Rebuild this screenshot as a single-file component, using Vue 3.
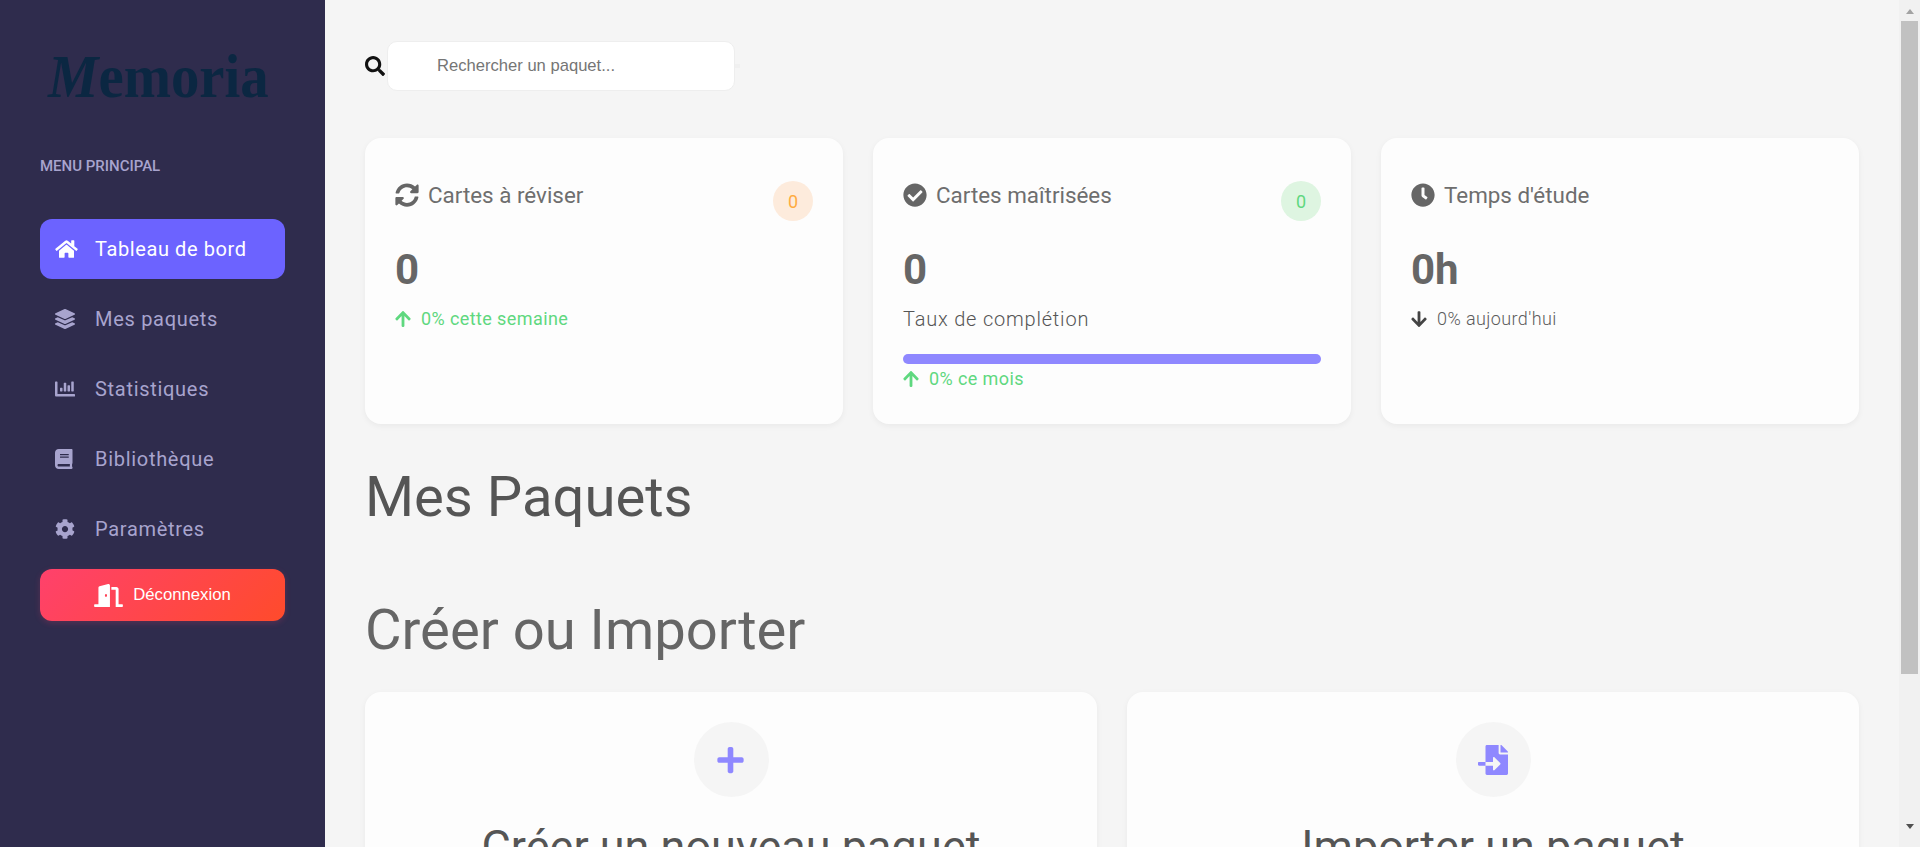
<template>
  <div class="layout">
    <aside class="sidebar">
      <div class="logo"><span class="logo-m">M</span>emoria</div>
      <div class="menu-title">MENU PRINCIPAL</div>
      <nav class="menu">
        <a v-for="item in menu" :key="item.label" :class="['menu-item', { active: item.active }]">
          <span class="menu-icon">
            <svg :viewBox="item.box" :style="{ width: item.w + 'px' }"><path :d="item.d" /></svg>
          </span>
          <span>{{ item.label }}</span>
        </a>
      </nav>
      <button class="logout">
        <svg class="logout-icon" viewBox="0 0 640 512"><path :d="icons.door" /></svg>
        <span>Déconnexion</span>
      </button>
    </aside>

    <main class="main">
      <div class="search">
        <svg class="search-icon" viewBox="0 0 512 512"><path :d="icons.search" /></svg>
        <input type="text" placeholder="Rechercher un paquet..." />
      </div>

      <section class="stats">
        <div class="card">
          <div class="card-head">
            <h3><svg viewBox="0 0 512 512"><path :d="icons.sync" /></svg>Cartes à réviser</h3>
            <span class="badge orange">0</span>
          </div>
          <div class="value">0</div>
          <div class="trend up">
            <svg viewBox="0 0 448 512"><path :d="icons.up" /></svg>0% cette semaine
          </div>
        </div>

        <div class="card">
          <div class="card-head">
            <h3><svg viewBox="0 0 512 512"><path :d="icons.check" /></svg>Cartes maîtrisées</h3>
            <span class="badge green">0</span>
          </div>
          <div class="value">0</div>
          <div class="rate">Taux de complétion</div>
          <div class="bar"></div>
          <div class="trend up tight">
            <svg viewBox="0 0 448 512"><path :d="icons.up" /></svg>0% ce mois
          </div>
        </div>

        <div class="card">
          <div class="card-head">
            <h3><svg viewBox="0 0 512 512"><path :d="icons.clock" /></svg>Temps d'étude</h3>
          </div>
          <div class="value">0h</div>
          <div class="trend down">
            <svg viewBox="0 0 448 512"><path :d="icons.down" /></svg>0% aujourd'hui
          </div>
        </div>
      </section>

      <h2 class="packs-title">Mes Paquets</h2>
      <h2 class="create-title">Créer ou Importer</h2>

      <section class="actions">
        <div class="action">
          <div class="action-icon"><svg class="plus" viewBox="0 0 448 512"><path :d="icons.plus" /></svg></div>
          <h3>Créer un nouveau paquet</h3>
        </div>
        <div class="action">
          <div class="action-icon"><svg class="file" viewBox="0 0 512 512"><path :d="icons.file" /></svg></div>
          <h3>Importer un paquet</h3>
        </div>
      </section>
    </main>

    <div class="scrollbar">
      <div class="scroll-btn"><i class="arrow-up"></i></div>
      <div class="thumb"></div>
      <div class="scroll-btn bottom"><i class="arrow-down"></i></div>
    </div>
  </div>
</template>

<script setup>
const icons = {
  door: 'M624 448h-80V113.45C544 86.19 522.47 64 496 64H384v64h96v384h144c8.84 0 16-7.16 16-16v-32c0-8.84-7.16-16-16-16zM312.24 1.01l-192 49.74C105.99 54.44 96 67.7 96 82.92V448H16c-8.84 0-16 7.16-16 16v32c0 8.84 7.16 16 16 16h336V33.18c0-21.58-19.56-37.41-39.76-32.17zM264 288c-13.25 0-24-14.33-24-32s10.75-32 24-32 24 14.33 24 32-10.75 32-24 32z',
  search: 'M505 442.7L405.3 343c-4.5-4.5-10.6-7-17-7H372c27.6-35.3 44-79.7 44-128C416 93.1 322.9 0 208 0S0 93.1 0 208s93.1 208 208 208c48.3 0 92.7-16.4 128-44v16.3c0 6.4 2.5 12.5 7 17l99.7 99.7c9.4 9.4 24.6 9.4 33.9 0l28.3-28.3c9.4-9.4 9.4-24.6.1-34zM208 336c-70.7 0-128-57.2-128-128 0-70.7 57.2-128 128-128 70.7 0 128 57.2 128 128 0 70.7-57.2 128-128 128z',
  sync: 'M370.72 133.28C339.458 104.008 298.888 87.962 255.848 88c-77.458.068-144.328 53.178-162.791 126.85-1.344 5.363-6.122 9.15-11.651 9.15H24.103c-7.498 0-13.194-6.807-11.807-14.176C33.933 94.924 134.813 8 256 8c66.448 0 126.791 26.136 171.315 68.685L463.03 40.97C478.149 25.851 504 36.559 504 57.941V192c0 13.255-10.745 24-24 24H345.941c-21.382 0-32.09-25.851-16.971-40.971l41.75-41.749zM32 296h134.059c21.382 0 32.09 25.851 16.971 40.971l-41.75 41.75c31.262 29.273 71.835 45.319 114.876 45.28 77.418-.07 144.315-53.144 162.787-126.849 1.344-5.363 6.122-9.15 11.651-9.15h57.304c7.498 0 13.194 6.807 11.807 14.176C478.067 417.076 377.187 504 256 504c-66.448 0-126.791-26.136-171.315-68.685L48.97 471.03C33.851 486.149 8 475.441 8 454.059V320c0-13.255 10.745-24 24-24z',
  check: 'M504 256c0 136.967-111.033 248-248 248S8 392.967 8 256 119.033 8 256 8s248 111.033 248 248zM227.314 387.314l184-184c6.248-6.248 6.248-16.379 0-22.627l-22.627-22.627c-6.248-6.249-16.379-6.249-22.628 0L216 308.118l-70.059-70.059c-6.248-6.248-16.379-6.248-22.628 0l-22.627 22.627c-6.248 6.248-6.248 16.379 0 22.627l104 104c6.249 6.249 16.379 6.249 22.628.001z',
  clock: 'M256,8C119,8,8,119,8,256S119,504,256,504,504,393,504,256,393,8,256,8Zm92.49,313h0l-20,25a16,16,0,0,1-22.49,2.5h0l-67-49.72a40,40,0,0,1-15-31.23V112a16,16,0,0,1,16-16h32a16,16,0,0,1,16,16V256l58,42.5A16,16,0,0,1,348.49,321Z',
  up: 'M34.9 289.5l-22.2-22.2c-9.4-9.4-9.4-24.6 0-33.9L207 39c9.4-9.4 24.6-9.4 33.9 0l194.3 194.3c9.4 9.4 9.4 24.6 0 33.9L413 289.4c-9.5 9.5-25 9.3-34.3-.4L264 168.6V456c0 13.3-10.7 24-24 24h-32c-13.3 0-24-10.7-24-24V168.6L69.2 289.1c-9.3 9.8-24.8 10-34.3.4z',
  down: 'M413.1 222.5l22.2 22.2c9.4 9.4 9.4 24.6 0 33.9L241 473c-9.4 9.4-24.6 9.4-33.9 0L12.7 278.6c-9.4-9.4-9.4-24.6 0-33.9l22.2-22.2c9.5-9.5 25-9.3 34.3.4L184 343.4V56c0-13.3 10.7-24 24-24h32c13.3 0 24 10.7 24 24v287.4l114.8-120.5c9.3-9.8 24.8-10 34.3-.4z',
  plus: 'M416 208H272V64c0-17.67-14.33-32-32-32h-32c-17.67 0-32 14.33-32 32v144H32c-17.67 0-32 14.33-32 32v32c0 17.67 14.33 32 32 32h144v144c0 17.67 14.33 32 32 32h32c17.67 0 32-14.33 32-32V304h144c17.67 0 32-14.33 32-32v-32c0-17.67-14.33-32-32-32z',
  file: 'M16 288c-8.8 0-16 7.2-16 16v32c0 8.8 7.2 16 16 16h112v-64zm489-183L407.1 7c-4.5-4.5-10.6-7-17-7H384v128h128v-6.1c0-6.3-2.5-12.4-7-16.9zm-153 31V0H152c-13.3 0-24 10.7-24 24v264h128v-65.2c0-14.3 17.3-21.4 27.4-11.3L379 308c6.6 6.7 6.6 17.4 0 24l-95.7 96.4c-10.1 10.1-27.4 3-27.4-11.3V352H128v136c0 13.3 10.7 24 24 24h336c13.3 0 24-10.7 24-24V160H376c-13.2 0-24-10.8-24-24z'
}

const menu = [
  {
    label: 'Tableau de bord',
    active: true,
    box: '0 0 576 512',
    w: 23,
    d: 'M280.37 148.26L96 300.11V464a16 16 0 0 0 16 16l112.06-.29a16 16 0 0 0 15.92-16V368a16 16 0 0 1 16-16h64a16 16 0 0 1 16 16v95.64a16 16 0 0 0 16 16.05L464 480a16 16 0 0 0 16-16V300L295.67 148.26a12.19 12.19 0 0 0-15.3 0zM571.6 251.47L488 182.56V44.05a12 12 0 0 0-12-12h-56a12 12 0 0 0-12 12v72.61L318.47 43a48 48 0 0 0-61 0L4.34 251.47a12 12 0 0 0-1.6 16.9l25.5 31A12 12 0 0 0 45.15 301l235.22-193.74a12.19 12.19 0 0 1 15.3 0L530.9 301a12 12 0 0 0 16.9-1.6l25.5-31a12 12 0 0 0-1.7-16.93z'
  },
  {
    label: 'Mes paquets',
    box: '0 0 512 512',
    w: 20,
    d: 'M12.41 148.02l232.94 105.67c6.8 3.09 14.49 3.09 21.29 0l232.94-105.67c16.55-7.51 16.55-32.52 0-40.03L266.65 2.31a25.607 25.607 0 0 0-21.29 0L12.41 107.98c-16.55 7.51-16.55 32.53 0 40.04zm487.18 88.28l-58.09-26.33-161.64 73.27c-7.56 3.43-15.59 5.17-23.86 5.17s-16.29-1.74-23.86-5.17L70.51 209.97l-58.1 26.33c-16.55 7.5-16.55 32.5 0 40l232.94 105.59c6.8 3.08 14.49 3.08 21.29 0L499.59 276.3c16.55-7.5 16.55-32.5 0-40zm0 127.8l-57.87-26.23-161.86 73.37c-7.56 3.43-15.59 5.17-23.86 5.17s-16.29-1.74-23.86-5.17L70.29 337.87 12.41 364.1c-16.55 7.5-16.55 32.5 0 40l232.94 105.59c6.8 3.08 14.49 3.08 21.29 0L499.59 404.1c16.55-7.5 16.55-32.5 0-40z'
  },
  {
    label: 'Statistiques',
    box: '0 0 512 512',
    w: 20,
    d: 'M332.8 320h38.4c6.4 0 12.8-6.4 12.8-12.8V172.8c0-6.4-6.4-12.8-12.8-12.8h-38.4c-6.4 0-12.8 6.4-12.8 12.8v134.4c0 6.4 6.4 12.8 12.8 12.8zm96 0h38.4c6.4 0 12.8-6.4 12.8-12.8V76.8c0-6.4-6.4-12.8-12.8-12.8h-38.4c-6.4 0-12.8 6.4-12.8 12.8v230.4c0 6.4 6.4 12.8 12.8 12.8zm-288 0h38.4c6.4 0 12.8-6.4 12.8-12.8v-70.4c0-6.4-6.4-12.8-12.8-12.8h-38.4c-6.4 0-12.8 6.4-12.8 12.8v70.4c0 6.4 6.4 12.8 12.8 12.8zm96 0h38.4c6.4 0 12.8-6.4 12.8-12.8V108.8c0-6.4-6.4-12.8-12.8-12.8h-38.4c-6.4 0-12.8 6.4-12.8 12.8v198.4c0 6.4 6.4 12.8 12.8 12.8zM496 384H64V80c0-8.84-7.16-16-16-16H16C7.16 64 0 71.16 0 80v336c0 17.67 14.33 32 32 32h464c8.84 0 16-7.16 16-16v-32c0-8.84-7.16-16-16-16z'
  },
  {
    label: 'Bibliothèque',
    box: '0 0 448 512',
    w: 17.5,
    d: 'M448 360V24c0-13.3-10.7-24-24-24H96C43 0 0 43 0 96v320c0 53 43 96 96 96h328c13.3 0 24-10.7 24-24v-16c0-7.5-3.5-14.3-8.9-18.7-4.2-15.4-4.2-59.3 0-74.7 5.4-4.3 8.9-11.1 8.9-18.6zM128 134c0-3.3 2.7-6 6-6h212c3.3 0 6 2.7 6 6v20c0 3.3-2.7 6-6 6H134c-3.3 0-6-2.7-6-6v-20zm0 64c0-3.3 2.7-6 6-6h212c3.3 0 6 2.7 6 6v20c0 3.3-2.7 6-6 6H134c-3.3 0-6-2.7-6-6v-20zm253.4 250H96c-17.7 0-32-14.3-32-32 0-17.6 14.4-32 32-32h285.4c-1.9 17.1-1.9 46.9 0 64z'
  },
  {
    label: 'Paramètres',
    box: '0 0 512 512',
    w: 20,
    d: 'M487.4 315.7l-42.6-24.6c4.3-23.2 4.3-47 0-70.2l42.6-24.6c4.9-2.8 7.1-8.6 5.5-14-11.1-35.6-30-67.8-54.7-94.6-3.8-4.1-10-5.1-14.8-2.3L380.8 110c-17.9-15.4-38.5-27.3-60.8-35.1V25.8c0-5.6-3.9-10.5-9.4-11.7-36.7-8.2-74.3-7.8-109.2 0-5.5 1.2-9.4 6.1-9.4 11.7V75c-22.2 7.9-42.8 19.8-60.8 35.1L88.7 85.5c-4.9-2.8-11-1.9-14.8 2.3-24.7 26.7-43.6 58.9-54.7 94.6-1.7 5.4.6 11.2 5.5 14L67.3 221c-4.3 23.2-4.3 47 0 70.2l-42.6 24.6c-4.9 2.8-7.1 8.6-5.5 14 11.1 35.6 30 67.8 54.7 94.6 3.8 4.1 10 5.1 14.8 2.3l42.6-24.6c17.9 15.4 38.5 27.3 60.8 35.1v49.2c0 5.6 3.9 10.5 9.4 11.7 36.7 8.2 74.3 7.8 109.2 0 5.5-1.2 9.4-6.1 9.4-11.7v-49.2c22.2-7.9 42.8-19.8 60.8-35.1l42.6 24.6c4.9 2.8 11 1.9 14.8-2.3 24.7-26.7 43.6-58.9 54.7-94.6 1.5-5.5-.7-11.3-5.6-14.1zM256 336c-44.1 0-80-35.9-80-80s35.9-80 80-80 80 35.9 80 80-35.9 80-80 80z'
  }
]
</script>

<style>
html,
body {
  margin: 0;
  height: 100%;
  overflow: hidden;
}
</style>

<style scoped>
.layout {
  display: flex;
  height: 100vh;
  overflow: hidden;
  font-family: Roboto, "Liberation Sans", sans-serif;
  background: #f5f5f5;
}

.sidebar {
  width: 325px;
  flex-shrink: 0;
  box-sizing: border-box;
  padding: 40px 40px 0;
  background: #2f2c4d;
}
.logo {
  height: 72px;
  margin-left: 8px;
  font-family: "Liberation Serif", serif;
  font-size: 62px;
  font-weight: 700;
  line-height: 72px;
  white-space: nowrap;
  color: #0b2742;
  filter: blur(0.5px);
  transform: scaleX(0.915);
  transform-origin: left center;
}
.logo-m {
  font-style: italic;
}
.menu-title {
  margin-top: 46px;
  font-size: 15px;
  font-weight: 500;
  line-height: 16px;
  color: #a8a4ce;
}
.menu {
  display: flex;
  flex-direction: column;
  gap: 10px;
  margin-top: 45px;
}
.menu-item {
  display: flex;
  align-items: center;
  height: 60px;
  padding-left: 15px;
  border-radius: 12px;
  font-size: 20px;
  letter-spacing: 0.7px;
  color: #a8a4ce;
}
.menu-item.active {
  background: #6c63ff;
  letter-spacing: 0.6px;
  color: #fff;
}
.menu-icon {
  display: flex;
  align-items: center;
  width: 40px;
  flex-shrink: 0;
}
.menu-icon svg {
  height: 20px;
  fill: currentColor;
}
.logout {
  display: flex;
  align-items: center;
  justify-content: center;
  gap: 10px;
  width: 245px;
  height: 52px;
  margin-top: 10px;
  border: none;
  border-radius: 12px;
  background: linear-gradient(135deg, #ff416c, #ff4b2b);
  box-shadow: 0 2px 6px rgba(255, 65, 108, 0.2);
  font-family: "Liberation Sans", sans-serif;
  font-size: 16.7px;
  color: #fff;
}
.logout-icon {
  width: 29px;
  height: 23px;
  fill: #fff;
}

.main {
  flex: 1;
  min-width: 0;
  box-sizing: border-box;
  padding: 41px 40px 0;
  overflow: hidden;
}

.search {
  display: flex;
  align-items: center;
  gap: 2px;
}
.search::after {
  content: "";
  width: 5px;
  height: 4px;
  margin-left: -2px;
  background: #f0f0f0;
}
.search-icon {
  width: 20px;
  height: 20px;
  flex-shrink: 0;
  fill: #111;
}
.search input {
  width: 348px;
  height: 50px;
  box-sizing: border-box;
  padding: 0 15px 0 49px;
  border: 1px solid #eee;
  border-radius: 10px;
  outline: none;
  background: #fff;
  font-family: "Liberation Sans", sans-serif;
  font-size: 16.6px;
}

.stats {
  display: grid;
  grid-template-columns: repeat(3, 1fr);
  gap: 30px;
  margin-top: 47px;
}
.card {
  height: 286px;
  box-sizing: border-box;
  padding: 44px 30px 0;
  border-radius: 16px;
  background: #fdfdfd;
  box-shadow: 0 2px 6px rgba(0, 0, 0, 0.05);
}
.card-head {
  display: flex;
  justify-content: space-between;
  align-items: flex-start;
  height: 40px;
}
.card-head h3 {
  display: flex;
  align-items: center;
  gap: 9px;
  margin: 0;
  font-size: 22.4px;
  font-weight: 400;
  line-height: 26px;
  color: #6e6e6e;
}
.card-head svg {
  width: 24px;
  height: 24px;
  fill: #666;
}
.badge {
  display: flex;
  align-items: center;
  justify-content: center;
  width: 40px;
  height: 40px;
  margin-top: -1px;
  border-radius: 50%;
  font-size: 18px;
}
.orange {
  background: #fdebdc;
  color: #ffab40;
}
.green {
  background: #def5e1;
  color: #5fd87f;
}
.value {
  margin-top: 23px;
  font-size: 42px;
  font-weight: 700;
  line-height: 50px;
  color: #666;
}
.trend {
  display: flex;
  align-items: center;
  gap: 10px;
  margin-top: 12px;
  font-size: 18px;
  letter-spacing: 0.4px;
  line-height: 24px;
}
.trend svg {
  width: 16px;
  height: 18px;
  fill: currentColor;
}
.up {
  color: #5fd87f;
}
.down {
  color: #5c5c5c;
  font-weight: 300;
  letter-spacing: 0.4px;
}
.down svg {
  fill: #444;
}
.rate {
  margin-top: 12px;
  font-size: 20px;
  font-weight: 300;
  letter-spacing: 0.8px;
  line-height: 24px;
  color: #555;
}
.bar {
  height: 10px;
  margin-top: 23px;
  border-radius: 5px;
  background: #8f88ff;
}
.tight {
  margin-top: 3px;
}

.packs-title,
.create-title {
  margin: 0;
  font-size: 56.2px;
  font-weight: 400;
  line-height: 68px;
}
.packs-title {
  margin-top: 39px;
  color: #555;
}
.create-title {
  margin-top: 65px;
  color: #666;
}
.actions {
  display: grid;
  grid-template-columns: repeat(2, 1fr);
  gap: 30px;
  margin-top: 28px;
}
.action {
  height: 300px;
  box-sizing: border-box;
  padding-top: 30px;
  border-radius: 16px;
  background: #fdfdfd;
  box-shadow: 0 2px 6px rgba(0, 0, 0, 0.05);
  text-align: center;
}
.action-icon {
  display: flex;
  align-items: center;
  justify-content: center;
  width: 75px;
  height: 75px;
  margin: 0 auto;
  border-radius: 50%;
  background: #f5f5f5;
}
.plus {
  width: 27px;
  height: 30px;
  margin-left: -2px;
  fill: #8f88ff;
}
.file {
  width: 30px;
  height: 30px;
  fill: #8f88ff;
}
.action h3 {
  margin: 24px 0 0;
  font-size: 45px;
  font-weight: 400;
  line-height: 52px;
  color: #555;
}

.scrollbar {
  display: flex;
  flex-direction: column;
  width: 21px;
  flex-shrink: 0;
  background: #f1f1f1;
}
.scroll-btn {
  display: flex;
  justify-content: center;
  align-items: flex-start;
  height: 21px;
  padding: 9px 0 0 1px;
  box-sizing: border-box;
}
.scroll-btn.bottom {
  margin-top: auto;
  height: 14px;
  padding-top: 0;
  margin-bottom: 9px;
}
.arrow-up {
  border: 4.5px solid transparent;
  border-top: 0;
  border-bottom: 5px solid #a3a3a3;
}
.arrow-down {
  border: 4.5px solid transparent;
  border-bottom: 0;
  border-top: 5px solid #505050;
}
.thumb {
  width: 17px;
  height: 653px;
  margin-left: 2px;
  background: #c1c1c1;
}
</style>
